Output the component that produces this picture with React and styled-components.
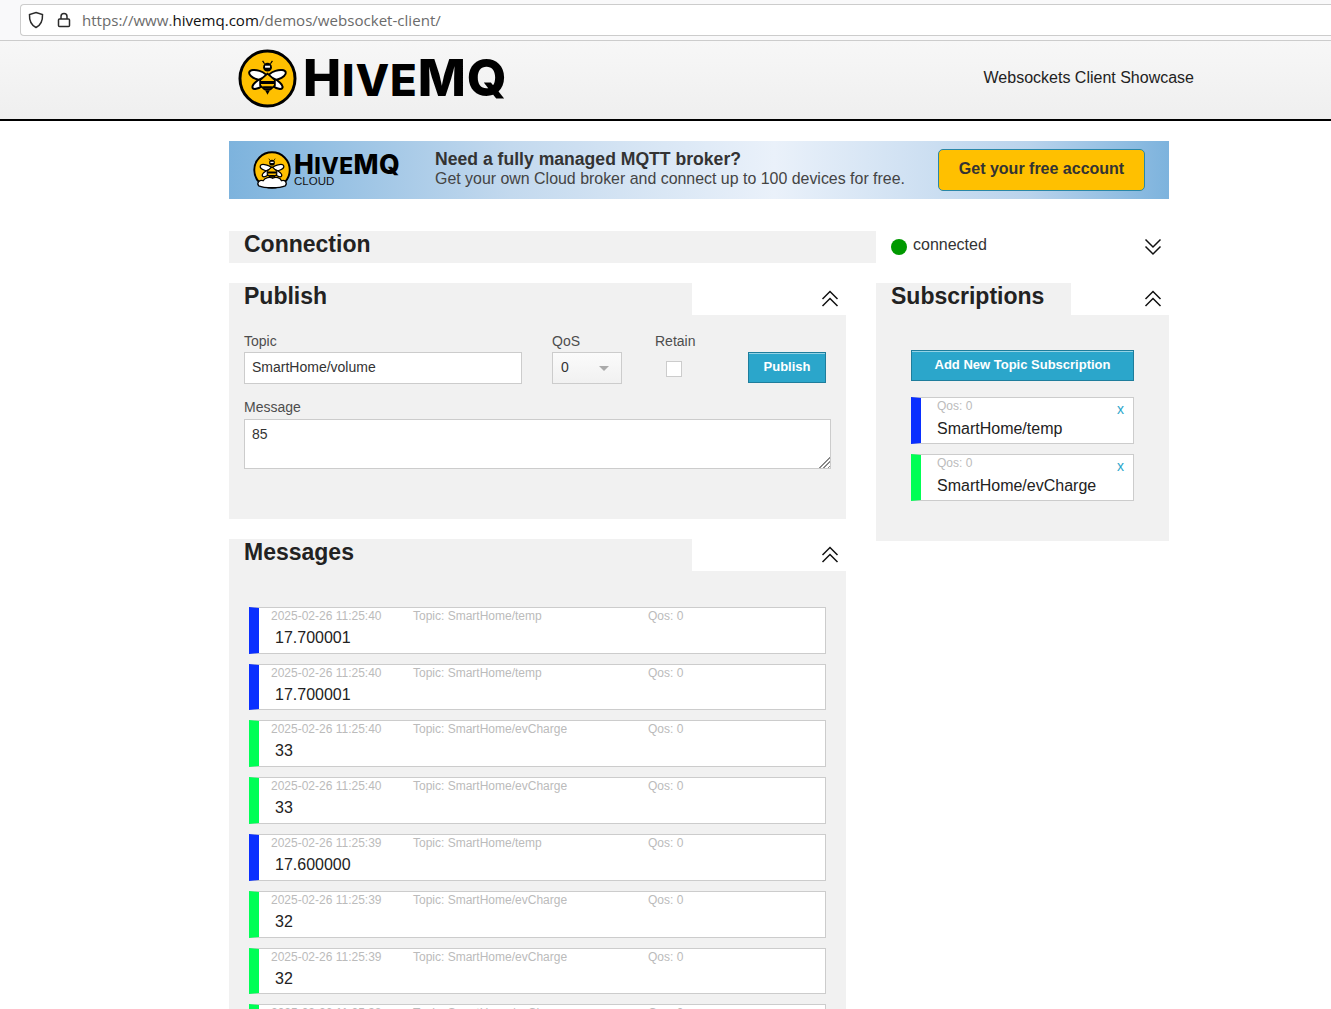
import React from "react";
import styled, { createGlobalStyle } from "styled-components";

const BLUE = "#0a2fff";
const GREEN = "#00ff55";
const PANEL = "#f1f1f1";

const messages = [
    { time: "2025-02-26 11:25:40", topic: "SmartHome/temp", value: "17.700001", color: BLUE },
    { time: "2025-02-26 11:25:40", topic: "SmartHome/temp", value: "17.700001", color: BLUE },
    { time: "2025-02-26 11:25:40", topic: "SmartHome/evCharge", value: "33", color: GREEN },
    { time: "2025-02-26 11:25:40", topic: "SmartHome/evCharge", value: "33", color: GREEN },
    { time: "2025-02-26 11:25:39", topic: "SmartHome/temp", value: "17.600000", color: BLUE },
    { time: "2025-02-26 11:25:39", topic: "SmartHome/evCharge", value: "32", color: GREEN },
    { time: "2025-02-26 11:25:39", topic: "SmartHome/evCharge", value: "32", color: GREEN },
    { time: "2025-02-26 11:25:38", topic: "SmartHome/evCharge", value: "32", color: GREEN },
];

const subscriptions = [
    { topic: "SmartHome/temp", color: BLUE },
    { topic: "SmartHome/evCharge", color: GREEN },
];

const GlobalStyle = createGlobalStyle`
    html, body {
        margin: 0;
        padding: 0;
        height: 100%;
        overflow: hidden;
        background: #fff;
    }
    * {
        box-sizing: border-box;
    }
    body {
        font-family: "Liberation Sans", Arial, sans-serif;
        color: #222;
    }
`;

const Page = styled.div`
    height: 1009px;
    overflow: hidden;
`;

const BrowserBar = styled.div`
    height: 41px;
    padding: 4px 0 4px 20px;
    background: #f9f9fa;
    border-bottom: 1px solid #ccc;
`;

const AddressBox = styled.div`
    height: 32px;
    display: flex;
    align-items: center;
    padding-left: 7px;
    background: #fff;
    border: 1px solid #ccc;
    border-right: none;
    border-radius: 4px 0 0 4px;
`;

const BarIcon = styled.svg`
    flex: none;
    margin-right: ${(p) => p.$gap}px;
    fill: none;
    stroke: #2b2b2b;
    stroke-width: 1.5;
`;

const Url = styled.span`
    font-family: "Open Sans", "Noto Sans", sans-serif;
    font-size: 15.08px;
    color: #6b6b6b;
    white-space: nowrap;
    b {
        font-weight: 400;
        color: #111;
    }
`;

const SiteHeader = styled.header`
    height: 80px;
    background: linear-gradient(to bottom, #f7f7f7, #efefef);
    border-bottom: 2px solid #000;
    padding: 0 137px 3px 238px;
    display: flex;
    align-items: center;
    justify-content: space-between;
`;

const LogoRow = styled.div`
    display: flex;
    align-items: center;
    gap: ${(p) => p.$gap}px;
`;

const Wordmark = styled.span`
    font-family: Inter, "Liberation Sans", sans-serif;
    font-weight: 800;
    font-size: ${(p) => p.$size}px;
    letter-spacing: 0.017em;
    line-height: 0.8;
    color: #000;
    white-space: nowrap;
    small {
        font-size: 0.86em;
    }
`;

const SiteTitle = styled.div`
    margin-bottom: 2px;
    font-size: 16px;
    color: #222;
`;

const Main = styled.main`
    width: 940px;
    margin: 20px 0 0 229px;
`;

const Banner = styled.div`
    height: 58px;
    display: flex;
    align-items: center;
    padding: 0 24px 0 24px;
    background: linear-gradient(to right, #7db3dd 0%, #c3d9ee 30%, #eaf1fa 58%, #b9d3ec 85%, #7db3dd 100%);
`;

const BannerLogo = styled.div`
    width: 182px;
    display: flex;
    align-items: center;
    gap: 3px;
`;

const BannerWords = styled.div`
    display: flex;
    flex-direction: column;
`;

const CloudLabel = styled.span`
    font-size: 11.5px;
    line-height: 10px;
    color: #111;
`;

const BannerText = styled.div`
    flex: 1;
    padding-bottom: 3px;
    color: #444;
    font-size: 15.93px;
    line-height: 20px;
    h3 {
        margin: 0;
        font-size: 17.6px;
        font-weight: 700;
        color: #333;
    }
`;

const CloudButton = styled.button`
    width: 207px;
    height: 42px;
    margin: 0;
    padding: 0 0 2px;
    font: 700 16px "Liberation Sans", Arial, sans-serif;
    color: #333;
    background: #ffc000;
    border: 1px solid #2a87a8;
    border-radius: 5px;
`;

const Columns = styled.div`
    display: flex;
    margin-top: 32px;
`;

const LeftColumn = styled.div`
    width: 647px;
    display: flex;
    flex-direction: column;
`;

const RightColumn = styled.div`
    width: 293px;
    display: flex;
    flex-direction: column;
`;

const ConnectionBar = styled.div`
    height: 32px;
    padding-left: 15px;
    margin-bottom: 20px;
    background: ${PANEL};
`;

const SectionTitle = styled.h2`
    margin: 0;
    font-size: 23px;
    line-height: 27px;
    font-weight: 700;
    color: #222;
`;

const StatusRow = styled.div`
    height: 32px;
    margin-bottom: 20px;
    padding: 0 7px 0 15px;
    display: flex;
    align-items: center;
`;

const StatusDot = styled.span`
    width: 16px;
    height: 16px;
    margin: 0 6px 0 0;
    border-radius: 50%;
    background: #009900;
`;

const StatusText = styled.span`
    flex: 1;
    font-size: 16px;
    color: #333;
    margin-bottom: 4px;
`;

const Section = styled.section`
    width: ${(p) => p.$width}px;
    margin-bottom: 20px;
`;

const SectionHead = styled.div`
    height: 32px;
    display: flex;
    align-items: flex-start;
    justify-content: space-between;
`;

const SectionTab = styled.div`
    width: ${(p) => p.$width}px;
    height: 32px;
    padding-left: 15px;
    background: ${PANEL};
`;

const Chevrons = styled.svg`
    flex: none;
    margin: 7px 7px 0 0;
    fill: none;
    stroke: #111;
    stroke-width: 1.5;
`;

const StatusChevrons = styled(Chevrons)`
    margin: 0;
`;

const SectionBody = styled.div`
    height: ${(p) => (p.$height ? `${p.$height}px` : "auto")};
    padding: ${(p) => p.$padding};
    background: ${PANEL};
`;

const FormRow = styled.div`
    display: flex;
    align-items: flex-start;
    margin-bottom: 13px;
`;

const Field = styled.label`
    display: block;
    width: ${(p) => (p.$width ? `${p.$width}px` : "100%")};
    margin-right: ${(p) => p.$gap || 0}px;
    font-size: 14px;
    line-height: 21px;
    color: #4d4d4d;
`;

const TextInput = styled.input`
    display: block;
    width: 100%;
    height: 32px;
    padding: 0 7px 2px;
    font: 14px "Liberation Sans", Arial, sans-serif;
    color: #333;
    background: #fff;
    border: 1px solid #ccc;
    border-radius: 0;
    outline: none;
`;

const SelectWrap = styled.div`
    position: relative;
    &::after {
        content: "";
        position: absolute;
        left: 47px;
        top: 14px;
        border: 5px solid transparent;
        border-top-color: #aaa;
        border-bottom: none;
    }
`;

const SelectBox = styled.select`
    display: block;
    width: 100%;
    height: 32px;
    padding: 0 8px 2px;
    appearance: none;
    font: 14px "Liberation Sans", Arial, sans-serif;
    color: #333;
    background: linear-gradient(to bottom, #fbfbfb, #f1f1f1);
    border: 1px solid #ccc;
    border-radius: 0;
`;

const RetainBox = styled.input`
    display: block;
    width: 16px;
    height: 16px;
    margin: 9px 0 0 11px;
    appearance: none;
    background: #fff;
    border: 1px solid #ccc;
`;

const TealButton = styled.button`
    display: block;
    width: ${(p) => p.$width}px;
    height: 31px;
    margin: ${(p) => p.$margin || 0};
    padding: 0 0 2px;
    font: 700 13px "Liberation Sans", Arial, sans-serif;
    color: #fff;
    background: #2ba6cb;
    border: 1px solid #1e7d9c;
    box-shadow: inset 0 1px 0 rgba(255, 255, 255, 0.5);
`;

const AreaWrap = styled.div`
    position: relative;
    margin-top: 1px;
    &::after {
        content: "";
        position: absolute;
        right: 1px;
        bottom: 1px;
        width: 12px;
        height: 12px;
        background: repeating-linear-gradient(135deg, #888 0 1px, #fff 1px 3px);
        clip-path: polygon(100% 0, 100% 100%, 0 100%);
    }
`;

const MessageArea = styled.textarea`
    display: block;
    width: 100%;
    height: 50px;
    padding: 6px 7px;
    font: 14px "Liberation Sans", Arial, sans-serif;
    color: #333;
    background: #fff;
    border: 1px solid #ccc;
    border-radius: 0;
    outline: none;
    resize: none;
`;

const Card = styled.div`
    height: 46.8px;
    margin-bottom: 10px;
    display: flex;
    background: #fff;
    border: 1px solid #ccc;
    border-left: 10px solid ${(p) => p.$color};
`;

const MessageCard = styled(Card)`
    width: 577px;
    flex-direction: column;
    padding-left: 12px;
`;

const MetaRow = styled.div`
    display: flex;
    height: 15px;
    margin-top: 1px;
    font-size: 12px;
    line-height: 15px;
    color: #bbb;
    white-space: nowrap;
`;

const MetaCell = styled.span`
    width: ${(p) => p.$width}px;
`;

const MessageValue = styled.div`
    margin: 2px 0 0 4px;
    font-size: 16px;
    line-height: 24px;
    color: #222;
`;

const SubCard = styled(Card)`
    position: relative;
    flex-direction: column;
    padding-left: 16px;
`;

const SubValue = styled.div`
    margin-top: 3px;
    font-size: 16px;
    line-height: 24px;
    color: #222;
`;

const RemoveLink = styled.a`
    position: absolute;
    top: 3px;
    right: 9px;
    font-size: 14px;
    line-height: 16px;
    color: #2ba6cb;
`;

const Bee = ({ size, cloud }) => (
    <svg width={size} height={size} viewBox="-30 -30 60 60">
        <circle r="28" fill="#ffc000" stroke="#000" strokeWidth="3" />
        <g fill="#fff" stroke="#000" strokeWidth="2">
            <ellipse cx="-9.5" cy="-3.5" rx="9.5" ry="4.5" transform="rotate(18 -9.5 -3.5)" />
            <ellipse cx="9.5" cy="-3.5" rx="9.5" ry="4.5" transform="rotate(-18 9.5 -3.5)" />
            <ellipse cx="-8" cy="5" rx="8.5" ry="3.6" transform="rotate(-34 -8 5)" />
            <ellipse cx="8" cy="5" rx="8.5" ry="3.6" transform="rotate(34 8 5)" />
        </g>
        <circle cy="-11.5" r="4.5" fill="#000" />
        <path d="M-3 -15 L-5 -18 M3 -15 L5 -18" stroke="#000" strokeWidth="1.2" />
        <path d="M-2.5 -13 H2.5 V-11 H-2.5 Z" fill="#fff" />
        <path d="M0 -5 L7.5 1.5 L7.5 7 L3 11 L-3 11 L-7.5 7 L-7.5 1.5 Z" fill="#ffc000" stroke="#000" strokeWidth="1.8" />
        <path d="M-7.5 2.5 H7.5 V5.5 H-7.5 Z M-4.5 8 H4.5 V10.5 H-4.5 Z" fill="#000" />
        <path d="M-2.5 12 H2.5 L0 16.5 Z" fill="#000" />
        {cloud && (
            <path
                d="M-21 25 C-25 20 -19 15 -14 17 C-11 12 -3 10 1 13 C6 10 13 12 15 17 C20 15 25 20 21 25 C12 29 -12 29 -21 25 Z"
                fill="#fff"
                stroke="#000"
                strokeWidth="2"
            />
        )}
    </svg>
);

const DoubleChevron = ({ as: Icon = Chevrons, down }) => (
    <Icon as="svg" width="18" height="18" viewBox="0 0 18 18">
        {down ? (
            <path d="M1.5 1.5 L9 9 L16.5 1.5 M1.5 8.5 L9 16 L16.5 8.5" />
        ) : (
            <path d="M1.5 9 L9 1.5 L16.5 9 M1.5 16 L9 8.5 L16.5 16" />
        )}
    </Icon>
);

const App = () => {
    return (
        <Page>
            <GlobalStyle />
            <BrowserBar>
                <AddressBox>
                    <BarIcon $gap={13} width="16" height="18" viewBox="0 0 16 18">
                        <path d="M8 1.5 L14.5 3.5 C14.8 9.5 13 14 8 16.5 C3 14 1.2 9.5 1.5 3.5 Z" />
                    </BarIcon>
                    <BarIcon $gap={11} width="14" height="16" viewBox="0 0 14 16">
                        <rect x="1.5" y="7" width="11" height="7.5" rx="1" />
                        <path d="M4 7 V4.5 C4 0.5 10 0.5 10 4.5 V7" />
                    </BarIcon>
                    <Url>
                        https://www.<b>hivemq.com</b>/demos/websocket-client/
                    </Url>
                </AddressBox>
            </BrowserBar>
            <SiteHeader>
                <LogoRow $gap={6}>
                    <Bee size={59} />
                    <Wordmark $size={51}>
                        H<small>IVE</small>MQ
                    </Wordmark>
                </LogoRow>
                <SiteTitle>Websockets Client Showcase</SiteTitle>
            </SiteHeader>
            <Main>
                <Banner>
                    <BannerLogo>
                        <Bee size={38} cloud />
                        <BannerWords>
                            <Wordmark $size={26.5}>
                                H<small>IVE</small>MQ
                            </Wordmark>
                            <CloudLabel>CLOUD</CloudLabel>
                        </BannerWords>
                    </BannerLogo>
                    <BannerText>
                        <h3>Need a fully managed MQTT broker?</h3>
                        Get your own Cloud broker and connect up to 100 devices for free.
                    </BannerText>
                    <CloudButton>Get your free account</CloudButton>
                </Banner>
                <Columns>
                    <LeftColumn>
                        <ConnectionBar>
                            <SectionTitle>Connection</SectionTitle>
                        </ConnectionBar>
                        <Section $width={617}>
                            <SectionHead>
                                <SectionTab $width={463}>
                                    <SectionTitle>Publish</SectionTitle>
                                </SectionTab>
                                <DoubleChevron />
                            </SectionHead>
                            <SectionBody $height={204} $padding="16px 15px 0">
                                <FormRow>
                                    <Field $width={278} $gap={30}>
                                        Topic
                                        <TextInput defaultValue="SmartHome/volume" />
                                    </Field>
                                    <Field $width={70} $gap={33}>
                                        QoS
                                        <SelectWrap>
                                            <SelectBox defaultValue="0">
                                                <option>0</option>
                                                <option>1</option>
                                                <option>2</option>
                                            </SelectBox>
                                        </SelectWrap>
                                    </Field>
                                    <Field $width={93}>
                                        Retain
                                        <RetainBox type="checkbox" />
                                    </Field>
                                    <TealButton $width={78} $margin="21px 0 0 0">
                                        Publish
                                    </TealButton>
                                </FormRow>
                                <Field>
                                    Message
                                    <AreaWrap>
                                        <MessageArea defaultValue="85" />
                                    </AreaWrap>
                                </Field>
                            </SectionBody>
                        </Section>
                        <Section $width={617}>
                            <SectionHead>
                                <SectionTab $width={463}>
                                    <SectionTitle>Messages</SectionTitle>
                                </SectionTab>
                                <DoubleChevron />
                            </SectionHead>
                            <SectionBody $padding="35.8px 20px 0">
                                {messages.map((msg, i) => (
                                    <MessageCard key={i} $color={msg.color}>
                                        <MetaRow>
                                            <MetaCell $width={142}>{msg.time}</MetaCell>
                                            <MetaCell $width={235}>Topic: {msg.topic}</MetaCell>
                                            <MetaCell $width={60}>Qos: 0</MetaCell>
                                        </MetaRow>
                                        <MessageValue>{msg.value}</MessageValue>
                                    </MessageCard>
                                ))}
                            </SectionBody>
                        </Section>
                    </LeftColumn>
                    <RightColumn>
                        <StatusRow>
                            <StatusDot />
                            <StatusText>connected</StatusText>
                            <DoubleChevron as={StatusChevrons} down />
                        </StatusRow>
                        <Section $width={293}>
                            <SectionHead>
                                <SectionTab $width={195}>
                                    <SectionTitle>Subscriptions</SectionTitle>
                                </SectionTab>
                                <DoubleChevron />
                            </SectionHead>
                            <SectionBody $height={226} $padding="35px 35px 0">
                                <TealButton $width={223} $margin="0 0 16px 0">
                                    Add New Topic Subscription
                                </TealButton>
                                {subscriptions.map((sub) => (
                                    <SubCard key={sub.topic} $color={sub.color}>
                                        <MetaRow>Qos: 0</MetaRow>
                                        <SubValue>{sub.topic}</SubValue>
                                        <RemoveLink>x</RemoveLink>
                                    </SubCard>
                                ))}
                            </SectionBody>
                        </Section>
                    </RightColumn>
                </Columns>
            </Main>
        </Page>
    );
};

export default App;
